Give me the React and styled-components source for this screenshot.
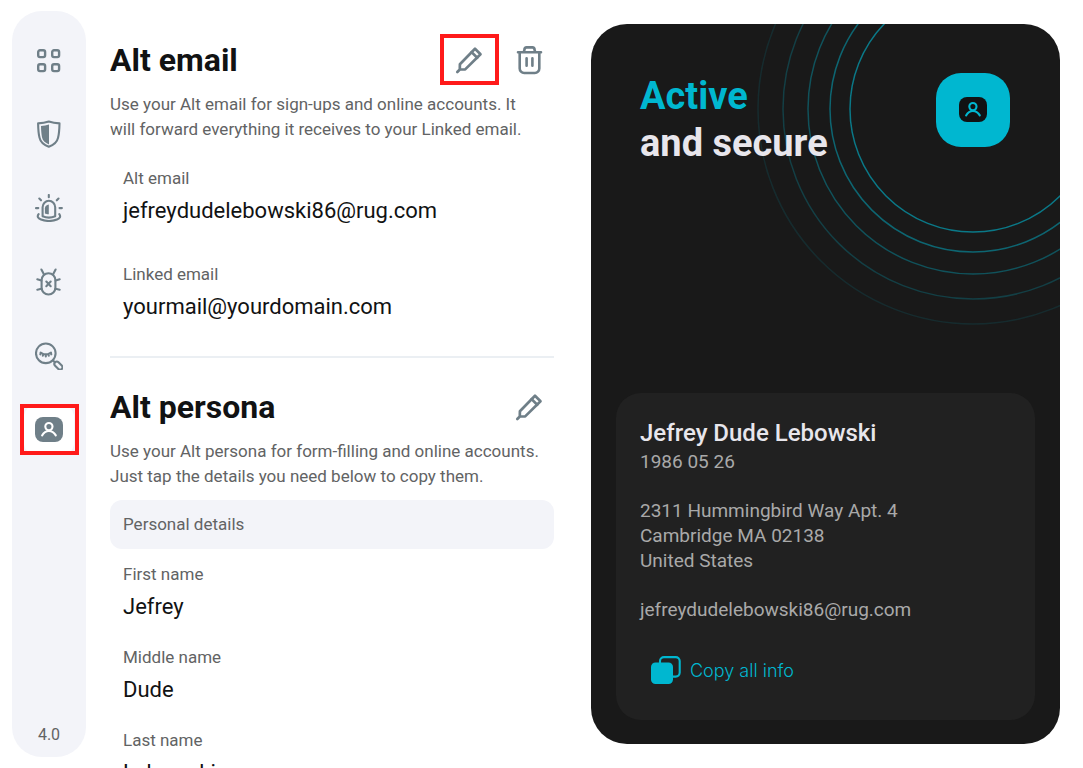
import React, { useState } from "react";
import styled, { createGlobalStyle } from "styled-components";

const NAV_ITEMS = [
  { id: "dashboard", label: "Dashboard", Icon: DashboardIcon },
  { id: "antivirus", label: "Antivirus", Icon: ShieldIcon },
  { id: "alert", label: "Alert", Icon: SirenIcon },
  { id: "scanner", label: "Scanner", Icon: BugIcon },
  { id: "search", label: "Private search", Icon: SearchIcon },
  { id: "altid", label: "Alternative ID", Icon: PersonaIcon }
];

const EMAILS = [
  { label: "Alt email", value: "jefreydudelebowski86@rug.com" },
  { label: "Linked email", value: "yourmail@yourdomain.com" }
];

const PERSONA = [
  { label: "First name", value: "Jefrey" },
  { label: "Middle name", value: "Dude" },
  { label: "Last name", value: "Lebowski" }
];

const ADDRESS = ["2311 Hummingbird Way Apt. 4", "Cambridge MA 02138", "United States"];

// radius and opacity of each ring behind the badge
const RINGS = [
  [123, 0.6],
  [143, 0.48],
  [165, 0.36],
  [190, 0.24],
  [215, 0.12]
];

function App() {
  const [active, setActive] = useState("altid");

  return (
    <>
      <GlobalStyle />
      <Page>
        <Sidebar>
          {NAV_ITEMS.map(({ id, label, Icon }) => (
            <IconButton
              key={id}
              type="button"
              aria-label={label}
              $active={active === id}
              $marked={id === "altid"}
              onClick={() => setActive(id)}
            >
              <Icon />
            </IconButton>
          ))}
          <Version>4.0</Version>
        </Sidebar>

        <Content>
          <Section>
            <SectionHeader>
              <Title>Alt email</Title>
              <Actions>
                <IconButton type="button" aria-label="Edit Alt email" $marked>
                  <PencilIcon />
                </IconButton>
                <IconButton type="button" aria-label="Delete Alt email">
                  <TrashIcon />
                </IconButton>
              </Actions>
            </SectionHeader>
            <Description>
              Use your Alt email for sign-ups and online accounts. It
              <br />
              will forward everything it receives to your Linked email.
            </Description>
            <FieldList $top={24} $gap={35}>
              {EMAILS.map(field => (
                <Field key={field.label} {...field} />
              ))}
            </FieldList>
          </Section>
          <Divider />
          <Section>
            <SectionHeader>
              <Title>Alt persona</Title>
              <Actions>
                <IconButton type="button" aria-label="Edit Alt persona">
                  <PencilIcon />
                </IconButton>
              </Actions>
            </SectionHeader>
            <Description>
              Use your Alt persona for form-filling and online accounts.
              <br />
              Just tap the details you need below to copy them.
            </Description>
            <GroupTitle>Personal details</GroupTitle>
            <FieldList $top={13} $gap={22}>
              {PERSONA.map(field => (
                <Field key={field.label} {...field} />
              ))}
            </FieldList>
          </Section>
        </Content>

        <StatusCard>
          <StatusHeader>
            <Status>
              <span>Active</span>
              <br />
              and secure
            </Status>
            <Badge>
              <Rings viewBox="0 0 440 440" aria-hidden="true">
                {RINGS.map(([r, opacity]) => (
                  <circle key={r} cx="220" cy="220" r={r} opacity={opacity} />
                ))}
              </Rings>
              <PersonaIcon />
            </Badge>
          </StatusHeader>
          <InfoCard>
            <Name>Jefrey Dude Lebowski</Name>
            <Info>1986 05 26</Info>
            <Info>
              {ADDRESS.map(line => (
                <div key={line}>{line}</div>
              ))}
            </Info>
            <Info>jefreydudelebowski86@rug.com</Info>
            <CopyButton type="button">
              <CopyIcon />
              Copy all info
            </CopyButton>
          </InfoCard>
        </StatusCard>
      </Page>
    </>
  );
}

function Field({ label, value }) {
  return (
    <div>
      <Label>{label}</Label>
      <Value>{value}</Value>
    </div>
  );
}

function DashboardIcon() {
  return (
    <Icon width="28" height="28" viewBox="0 0 28 28" $stroke={2.4}>
      <rect x="3.200" y="4.200" width="6.900" height="6.900" rx="1.800" />
      <rect x="17.200" y="4.200" width="6.900" height="6.900" rx="1.800" />
      <rect x="3.200" y="18.200" width="6.900" height="6.900" rx="1.800" />
      <rect x="17.200" y="18.200" width="6.900" height="6.900" rx="1.800" />
    </Icon>
  );
}

function ShieldIcon() {
  return (
    <Icon width="28" height="28" viewBox="0 0 28 28">
      <path d="M13.800 1.600C10 2.900 6.500 3.300 3.100 3.400C3.200 8.500 3.500 13.500 4.500 17.600C5.400 21.800 9 25 13.800 26.800C18.600 25 22.200 21.800 23.100 17.600C24.100 13.500 24.400 8.500 24.500 3.400C21.200 3.300 17.600 2.900 13.800 1.600Z" />
      <path className="fill" d="M14 4.400V24.500C10 22.600 7.500 20.500 7 17.200C6.300 13.500 6.100 10 6 6C8.800 5.700 11.500 5.200 14 4.400Z" />
    </Icon>
  );
}

function SirenIcon() {
  return (
    <Icon width="28" height="28" viewBox="0 0 28 28">
      <path d="M7.600 22.300V13.300A6.200 6.400 0 0 1 20.200 13.300V22.300C16 24 11.800 24 7.600 22.300Z" />
      <path className="fill" d="M13.800 10.500V20.300C12.200 20.200 10.800 20 9.900 19.500V14.200C10 12.200 11.600 10.700 13.800 10.500Z" />
      <path d="M3.600 20.200C1.800 22.500 3 24.300 6 25.500C11 27.400 17 27.400 22 25.500C25 24.300 26 22.500 24.300 20.200M13.800 1V3.200M4.300 4.600L6 6.300M23.500 4.600L21.800 6.300M1 14.100H3.300M24.500 14.100H26.900" />
    </Icon>
  );
}

function BugIcon() {
  return (
    <Icon width="28" height="28" viewBox="0 0 28 28">
      <rect x="6.600" y="5.200" width="13.800" height="21.300" rx="6.900" />
      <path d="M6.400 1.500L8.900 6.300M20.600 1.500L18.100 6.300M2.300 11.300L6.400 12.600M24.700 11.300L20.600 12.600M2.300 21.700L6.400 20.700M24.700 21.700L20.600 20.700" />
      <path d="M11.300 13.600L15.700 18.200M15.700 13.600L11.300 18.200" />
    </Icon>
  );
}

function SearchIcon() {
  return (
    <Icon width="28" height="28" viewBox="0 0 28 28">
      <circle cx="10.800" cy="11.300" r="9.800" />
      <path d="M5.600 10.500C8.800 12.800 12.800 12.800 16 10.500M5.800 10.800L5.300 12.300M8.300 12.100L7.800 13.800M10.800 12.400V14.400M13.300 12.100L13.800 13.800M15.800 10.800L16.300 12.300M18 18.400L19.800 20.200" />
      <rect x="18.800" y="21.300" width="9.400" height="4.800" rx="2.400" transform="rotate(45 23.500 23.600)" />
    </Icon>
  );
}

function PersonaIcon() {
  return (
    <Icon width="28" height="26" viewBox="0 0 28 26">
      <rect className="fill" width="28" height="25" rx="8" />
      <g className="glyph">
        <circle cx="13.900" cy="9.600" r="3.600" />
        <path d="M7.100 18.400C8.800 15.400 11.200 14 13.900 14S19 15.400 20.800 18.400" />
      </g>
    </Icon>
  );
}

function PencilIcon() {
  return (
    <Icon width="28" height="28" viewBox="0 0 28 28" $stroke={2.7}>
      <path d="M2.300 26L4.800 23.500M4.800 23.500L4.900 18.200L20 2.800L25.500 8.300L10.200 23.400L4.800 23.500Z" />
      <path d="M16.600 6.100L22.200 11.700" />
    </Icon>
  );
}

function TrashIcon() {
  return (
    <Icon width="28" height="30" viewBox="0 0 28 30" $stroke={2.6}>
      <path d="M3 7.200H26M8.800 7L9.600 4.100A2 2 0 0 1 11.500 2.400H17.500A2 2 0 0 1 19.400 4.100L20.200 7M4.700 7.200V23.500A4.500 4.500 0 0 0 9.200 28H19.800A4.500 4.500 0 0 0 24.300 23.500V7.200" />
      <path d="M11.600 13.300V20.800M17.400 13.300V20.800" strokeLinecap="round" />
    </Icon>
  );
}

function CopyIcon() {
  return (
    <Icon width="30" height="28" viewBox="0 0 30 28">
      <rect className="fill" y="6.500" width="22" height="21.500" rx="4.500" />
      <path d="M9 7V5A4 4 0 0 1 13 1.100H24.700A4 4 0 0 1 28.700 5.100V16.600A4 4 0 0 1 24.700 20.600H22" />
    </Icon>
  );
}

export default App;

const GlobalStyle = createGlobalStyle`
  * {
    box-sizing: border-box;
  }
  body {
    margin: 0;
    background: #ffffff;
    color: #111213;
    font-family: Roboto, "Liberation Sans", sans-serif;
  }
  h1, h2, h3, p, dl, dt, dd {
    margin: 0;
  }
  button {
    font: inherit;
    cursor: pointer;
  }
`;

const Page = styled.div`
  height: 100vh;
  display: grid;
  grid-template-columns: 74px minmax(0, 444fr) minmax(0, 482fr);
  grid-template-rows: minmax(0, 1fr);
  column-gap: 24px;
  padding: 0 23px 0 12px;
  overflow: hidden;
`;

const Sidebar = styled.nav`
  display: flex;
  flex-direction: column;
  align-items: center;
  gap: 24px;
  margin: 11px 0;
  padding: 24px 12px 10px;
  border-radius: 30px;
  background: #f3f4f9;
`;

const IconButton = styled.button`
  position: relative;
  flex: none;
  width: 50px;
  height: 50px;
  display: flex;
  align-items: center;
  justify-content: center;
  padding: 0;
  border: none;
  border-radius: 12px;
  background: ${({ $active }) => ($active ? "#ffffff" : "transparent")};
  color: #6f7f88;
  --cutout: #ffffff;

  &::after {
    content: "";
    display: ${({ $marked }) => ($marked ? "block" : "none")};
    position: absolute;
    inset: -1px -5px 0 -4px;
    border: 4px solid #ff1a1a;
  }
`;

const Version = styled.div`
  margin-top: auto;
  font-size: 16px;
  line-height: 24px;
  color: #626364;
`;

const Icon = styled.svg`
  flex: none;
  fill: none;
  stroke: currentColor;
  stroke-width: ${({ $stroke = 2.1 }) => $stroke};
  stroke-linecap: round;
  stroke-linejoin: round;

  & .fill {
    fill: currentColor;
    stroke: none;
  }
  & .glyph {
    stroke: var(--cutout);
  }
`;

const Content = styled.main`
  padding-top: 35px;
  overflow-y: auto;
  scrollbar-width: none;
`;

const Section = styled.section`
  display: flex;
  flex-direction: column;
`;

const SectionHeader = styled.header`
  display: flex;
  align-items: center;
  justify-content: space-between;
  height: 50px;
`;

const Title = styled.h1`
  font-size: 32px;
  line-height: 40px;
  font-weight: 700;
`;

const Actions = styled.div`
  display: flex;
  gap: 10px;
`;

const Description = styled.p`
  margin-top: 7px;
  font-size: 17px;
  line-height: 25px;
  color: #626364;
`;

const GroupTitle = styled.h2`
  margin-top: 11px;
  padding: 12px 13px;
  border-radius: 12px;
  background: #f3f4f9;
  font-size: 17px;
  line-height: 25px;
  font-weight: 400;
  color: #626364;
`;

const FieldList = styled.dl`
  display: flex;
  flex-direction: column;
  gap: ${({ $gap }) => $gap}px;
  margin-top: ${({ $top }) => $top}px;
  padding: 0 13px;
`;

const Label = styled.dt`
  font-size: 17px;
  line-height: 25px;
  color: #626364;
`;

const Value = styled.dd`
  margin-top: 4px;
  font-size: 22px;
  line-height: 32px;
`;

const Divider = styled.hr`
  width: 100%;
  height: 2px;
  margin: 33px 0 24px;
  border: none;
  background: #ebeff3;
`;

const StatusCard = styled.aside`
  display: flex;
  flex-direction: column;
  justify-content: space-between;
  margin: 24px 0 24px 13px;
  padding: 49px 25px 24px;
  border-radius: 36px;
  background: #191919;
  overflow: hidden;
`;

const StatusHeader = styled.div`
  display: flex;
  justify-content: space-between;
  padding: 0 25px 0 24px;
`;

const Status = styled.h2`
  z-index: 1;
  font-size: 38px;
  line-height: 47px;
  font-weight: 700;
  color: #e8e6ec;

  & span {
    color: #00b7d0;
  }
`;

const Badge = styled.div`
  position: relative;
  flex: none;
  width: 74px;
  height: 74px;
  display: flex;
  align-items: center;
  justify-content: center;
  border-radius: 25px;
  background: #00b7d0;
  color: #111213;
  --cutout: #00b7d0;
`;

const Rings = styled.svg`
  position: absolute;
  top: -184px;
  left: -183px;
  width: 440px;
  height: 440px;
  fill: none;
  stroke: #00b7d0;
  stroke-width: 1.5;
`;

const InfoCard = styled.div`
  padding: 24px 24px 30px;
  border-radius: 25px;
  background: #212121;
`;

const Name = styled.h3`
  font-size: 24px;
  line-height: 32px;
  font-weight: 500;
  color: #e8e6ec;
`;

const Info = styled.div`
  font-size: 19px;
  line-height: 25px;
  color: #a9a9a9;

  & + & {
    margin-top: 24px;
  }
`;

const CopyButton = styled.button`
  display: flex;
  align-items: center;
  gap: 9px;
  margin-top: 28px;
  padding: 6px 11px;
  border: none;
  background: none;
  color: #00b7d0;
  font-family: Inter, "Liberation Sans", sans-serif;
  font-size: 18px;
  font-weight: 300;
  line-height: 25px;
`;
